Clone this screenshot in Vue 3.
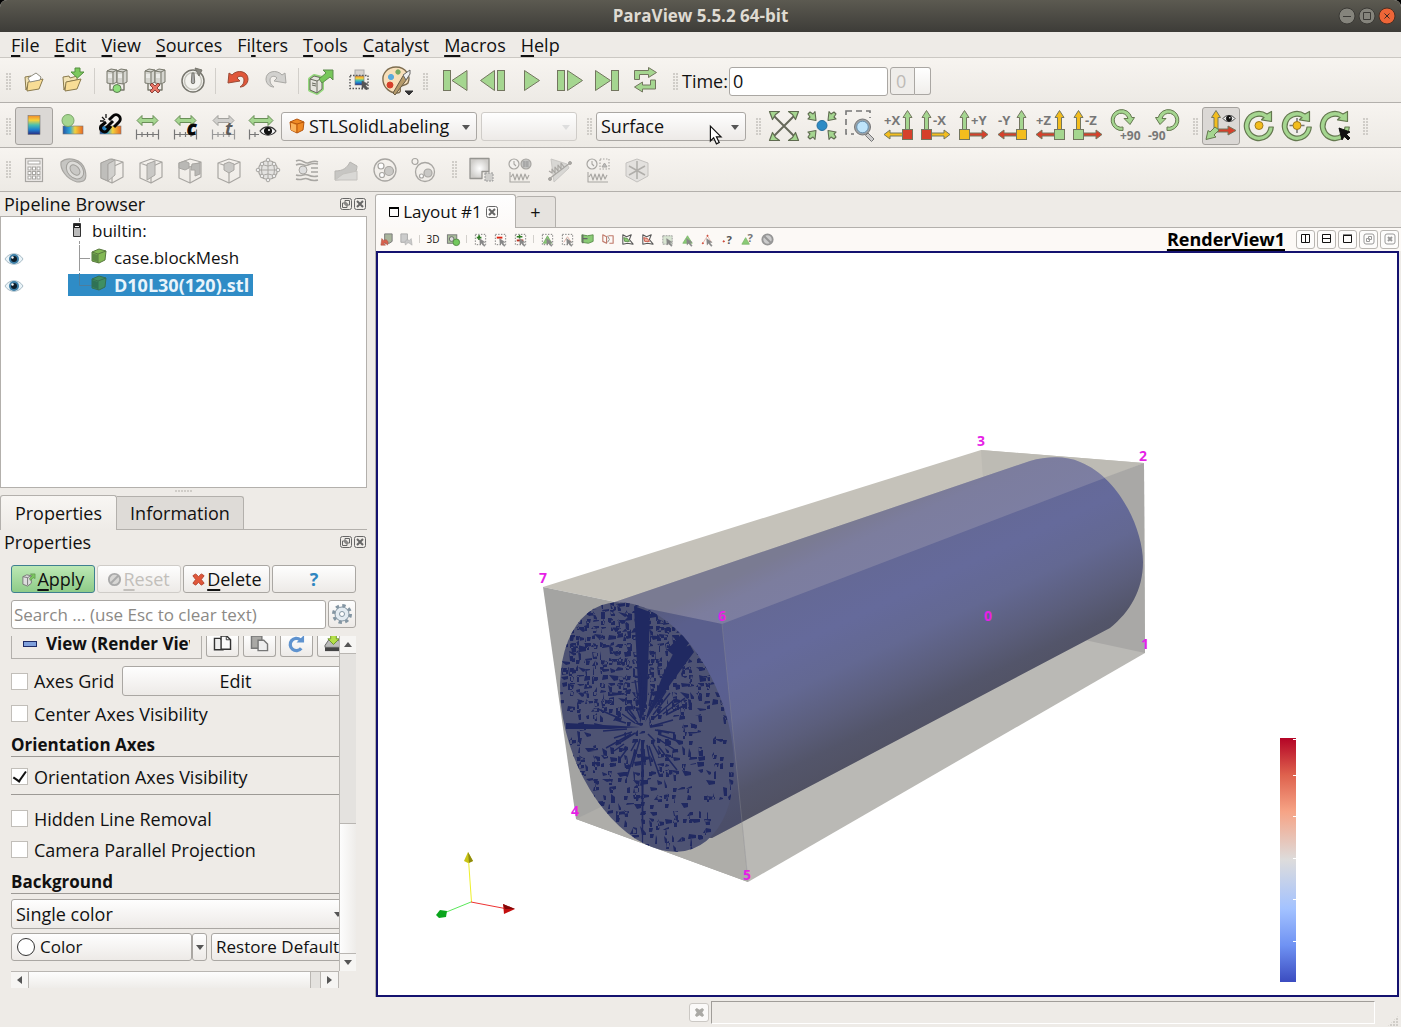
<script setup>
const GREEN = '#a5d690'
const EDGE = '#73765f'
const YELLOW = '#f3bd1d'
const RED = '#d6402b'

const p = (d, fill = 'none', stroke = EDGE, w = 1) =>
  `<path d="${d}" fill="${fill}" stroke="${stroke}" stroke-width="${w}" stroke-linejoin="round"/>`
const c = (x, y, r, fill = 'none', stroke = EDGE, w = 1) =>
  `<circle cx="${x}" cy="${y}" r="${r}" fill="${fill}" stroke="${stroke}" stroke-width="${w}"/>`
const r = (x, y, w, h, fill = 'none', stroke = EDGE, sw = 1, extra = '') =>
  `<rect x="${x}" y="${y}" width="${w}" height="${h}" fill="${fill}" stroke="${stroke}" stroke-width="${sw}" ${extra}/>`
const t = (x, y, s, text, fill = '#777', extra = '') =>
  `<text x="${x}" y="${y}" font-size="${s}" font-weight="700" fill="${fill}" ${extra}>${text}</text>`

const folder =
  p('M7 12l6-1 1 2 7-2v4l-10 2-3 8z', '#f2e3b4', '#8a7a4c') +
  p('M10 17l15-3-4 10-12 2z', '#f8dd96', '#8a7a4c')
const servers = (x) =>
  p(`M${x} 6l4-2 6 1v12l-4 2-6-1z`, '#d5d5cf', '#77776b') +
  p(`M${x} 6l6 1 4-2M${x + 6} 7v12`, 'none', '#77776b') +
  p(`M${x + 1} 10h4M${x + 1} 12h4`, 'none', '#fff')
const serverBase = servers(6) + servers(16) + p('M9 19v6h4M23 19v6h-4', 'none', '#77776b', 1.4)
const rainbowV = (x, y, w, h) => r(x, y, w, h, 'url(#rainbowV)', '#777', 0.6)
const rainbowH = (x, y, w, h) => r(x, y, w, h, 'url(#rainbowH)', '#777', 0.6)
const ruler = (col, x = 4) =>
  p(`M${x + 0.5} 19.5v10M${x + 22.5} 19.5v10M${x} 24.5h23M${x + 6} 22v5M${x + 11.5} 22v5M${x + 17} 22v5`, 'none', col, 1.2)
const arrowLR = (fill, edge, x = 5, w = 21) =>
  p(`M${x} 10.500l5-5v3h${w - 10}v-3l5 5-5 5v-3h-${w - 10}v3z`, fill, edge)
const cubeG = '#a8a6a2'
const wireCube = p('M5 9l11-4 11 3v15l-11 6-11-5zM5 9l11 4 11-5M16 13v16', 'none', cubeG, 1.2)
const eye = (x, y, s = 1) =>
  `<g transform="translate(${x} ${y}) scale(${s})">` +
  p('M-8 0c4-5.500 12-5.500 16 0c-4 5.500-12 5.500-16 0z', '#f4f4f4', '#333', 1.2) +
  c(0, 0, 3.6, '#111', '#111') + c(1, -1, 1, '#fff', 'none') + '</g>'

function axis(label, side, v, h, sq) {
  const right = side === 'r'
  const x = right ? 25.5 : 6.5
  const harrow = right
    ? p('M2 24.500l6-4.500v3h13v3h-13v3z', h)
    : p('M30 24.500l-6-4.500v3h-13v3h13v3z', h)
  return (
    harrow +
    p(`M${x} .5l4.500 7h-2.500v12h-4v-12h-2.500z`, v) +
    r(x - 5, 19.5, 10, 10, sq, EDGE) +
    t(right ? 2 : 13, 15, 13, label)
  )
}
const rotateRing = p('M30.300 17A14.500 14.500 0 1 1 24 4L28.500 1.500V11.500L18.500 9.800L21 7.500A10 10 0 1 0 26 17z', GREEN, '#64784f', 1.2)

const icons = {
  open: folder + p('M10 13l8-5 5 4-1 3-10 2z', '#fff', '#8f8d80'),
  recent: folder + p('M19 3h5v4h4l-6.500 6-6.500-6h4z', '#7cc95e', '#558f41'),
  connect: serverBase + c(16, 23.5, 4, '#8fe07c', '#5d7d52'),
  disconnect: serverBase + p('M11 20l2-2 3 3 3-3 2 2-3 3 3 3-2 2-3-3-3 3-2-2 3-3z', '#e77466', '#8e453c'),
  timer: c(16, 16, 11, '#f4f3ef', '#77766e', 1.5) + c(16, 16, 8.500, 'none', '#c4c3bb', 1.4) + p('M15 8h2l.7 9a1.700 1.700 0 1 1-3.400 0z', '#aaa', '#77766e') + p('M18 3l7 2-3 6z', '#8a8981', '#77766e'),
  undo: p('M6 18l1-10 3 2c5-6 16-4 16 4 0 5-4 8-8 8 3-2 4-4 4-7 0-4-5-5-7-2l3 3z', '#e0573a', '#9a4a35'),
  redo: p('M26 18l-1-10-3 2c-5-6-16-4-16 4 0 5 4 8 8 8-3-2-4-4-4-7 0-4 5-5 7-2l-3 3z', '#d2d1ce', '#a9a8a4'),
  apply: `<path d="M5 14l4-3 8 2v11l-5 4-7-3z" fill="none" stroke="#94d77c" stroke-width="4" stroke-linejoin="round"/>` + p('M5 14l4-3 8 2v11l-5 4-7-3z', '#e4e4dd', '#66685c') + p('M5 14l7 2 5-3M12 16v12M7 18l4 1M7 20l4 1', 'none', '#66685c') + p('M14 14l7-6-3-3h10v10l-3-3-8 6z', '#77c75a', '#5f8d4e'),
  extract: r(12, 5, 9, 6, '#d7d3cf', '#aaa') + r(7, 10.5, 18, 13, 'none', '#555', 1.4, 'stroke-dasharray="1.500 1.500"') + rainbowV(12, 11, 9, 9) + p('M19 16l6 3-2.500 1.500 2.500 3-1.500 1.500-3-3-1.500 2.500z', '#555', '#555', 0.6),
  palette: p('M15 2C6 2 1 9 2 16s7 12 14 12c5 0 3-4 3-6s6-1 8-4C30 11 25 2 15 2z', '#f7dfba', '#7d6c4e', 1.4) + c(10, 12, 2.600, '#58a9dc', '#58a9dc') + c(17, 7, 2.200, '#76a95f', '#76a95f') + c(9, 20, 3, '#d6402b', '#d6402b') + p('M27 7l-5 4-10 17 2 2 12-16z', '#b59a6a', '#665b45') + p('M29 5l-7 5 3 5 4-6z', '#eee', '#666') + p('M24 26h8l-4 4z', '#333', '#333'),
  first: r(4.5, 5.500, 7, 20, GREEN) + p('M28 5.500v20l-15-10z', GREEN),
  back: p('M17.500 5.500v20l-14-10z', GREEN) + r(20.500, 5.500, 7, 20, GREEN),
  play: p('M9.500 5.500v20l15-10z', GREEN),
  forward: r(4.5, 5.500, 7, 20, GREEN) + p('M14.500 5.500v20l15-10z', GREEN),
  last: p('M4.500 5.500v20l15-10z', GREEN) + r(20.500, 5.500, 7, 20, GREEN),
  loop: p('M5.500 14.500v-9h14v-3l8 5-8 5v-3h-9v5z', GREEN) + p('M26.500 15v9h-13v3l-8-5 8-5v3h8v-5z', GREEN),

  colorLegend: rainbowV(10, 5.500, 12, 19),
  editMap: rainbowH(7, 16, 20, 8) + c(12, 10.500, 6, GREEN, '#7aa569'),
  rescaleUse: rainbowH(6, 16, 21, 8) + '<path d="M15 10l4-4a4 4 0 0 1 6 6l-5 5M17 16l-4 5a4 4 0 0 1-6-5l5-4M12 18l7-7" fill="none" stroke="#050505" stroke-width="3"/>' + p('M8 7l3 3M12 4v4M6 11h4', 'none', '#111', 1.3),
  rescale: arrowLR(GREEN, '#6a8f58') + ruler('#777', 4),
  rescaleC: arrowLR(GREEN, '#6a8f58') + ruler('#777', 4) + t(17, 25, 19, 'c', '#050505', 'font-style="italic" stroke="#050505"'),
  rescaleT: arrowLR('#d0cfcc', '#a3a29e') + ruler('#999', 4) + t(17, 25, 18, 't', '#5b5b5b', 'font-style="italic"'),
  rescaleV: arrowLR(GREEN, '#6a8f58', 3, 24) + p('M3.500 19.500v10M3 24.500h10M9 22v5', 'none', '#777', 1.2) + eye(22, 21),
  resetCam: p('M6 6L26 26M26 6L6 26', 'none', '#66685a', 2) + p('M1.500 1.500h10l-4 3-3 5zM30.500 1.500h-10l4 3 3 5zM1.500 30.500h10l-4-3-3-5zM30.500 30.500h-10l4-3 3-5z', GREEN, '#5f6b50', 1.2),
  zoomData: c(16, 15.500, 5, '#2d8bc5', '#266f9e') + p('M10 10.500l-1-9-2 2.500-3-2-2 2 2 3-2 2zM22 10.500l1-9 2 2.500 3-2 2 2-2 3 2 2zM10 20.500l-1 9-2-2.500-3 2-2-2 2-3-2-2zM22 20.500l1 9 2-2.500 3 2 2-2-2-3 2-2z', GREEN, '#5f6b50', 1.1),
  zoomBox: r(2, 1, 24, 23, 'none', '#777', 1.6, 'stroke-dasharray="6 4"') + r(10, 8, 18, 18, '#f4f1ed', 'none') + c(18.500, 17, 8, '#9ea3a5', '#777') + c(18.500, 17, 5.800, '#bfe4fa', '#6790b0') + p('M24 23l6 6-2.500 2.500-6-6z', '#ccc', '#777'),
  px: axis('+X', 'r', GREEN, YELLOW, RED),
  mx: axis('-X', 'l', GREEN, YELLOW, RED),
  py: axis('+Y', 'l', GREEN, RED, YELLOW),
  my: axis('-Y', 'r', GREEN, RED, YELLOW),
  pz: axis('+Z', 'r', YELLOW, RED, GREEN),
  mz: axis('-Z', 'l', YELLOW, RED, GREEN),
  cw: p('M13 20.500A10.500 10.500 0 1 1 21.800 7.500H24.500L20 14.500L14 8.500H18A7 7 0 1 0 13 17z', GREEN, '#64784f') + t(10, 30, 12, '+90'),
  ccw: p('M19 20.500A10.500 10.500 0 1 0 10.200 7.500H7.500L12 14.500L18 8.500H14A7 7 0 1 1 19 17z', GREEN, '#64784f') + t(0, 30, 12, '-90'),
  axesEye: p('M11 .5l4.500 7h-2.500v13h-4v-13h-2.500z', YELLOW) + p('M31 20.500l-8-4.500v3h-11v3h11v3z', RED) + p('M10 17l4 3-5 5 2 2-10 2.500 2-9 2 1.500z', GREEN, '#64784f') + eye(24, 8.5, 0.75),
  center: rotateRing + c(16, 15.5, 4, YELLOW, '#a07b21'),
  pickCenter: rotateRing + p('M16 8v15M8.500 15.500h15', 'none', '#777', 1.6) + c(16, 15.5, 4, YELLOW, '#a07b21'),
  rotCursor: rotateRing + p('M20 18l11 4-4 2 4 4-2 2-4-4-2 4z', '#111', '#111'),

  calc: r(7.500, 4.500, 17, 23, '#efedea', cubeG, 1.2) + r(10, 7, 12, 3, '#fff', cubeG) + [10, 14.500, 19].map((x) => [13, 17.500, 22].map((y) => r(x, y, 3, 3, '#fff', cubeG)).join('')).join(''),
  contour: p('M4 8c7-6 21-3 24 8s-2 12-8 12C9 25 3 15 4 8z', '#c6c5c2', cubeG, 1.2) + '<ellipse cx="18" cy="16" rx="10" ry="7.500" transform="rotate(48 18 16)" fill="#dddcd9" stroke="#a19f9b"/><ellipse cx="18" cy="16" rx="6" ry="4" transform="rotate(48 18 16)" fill="#c9c8c5" stroke="#a19f9b"/>',
  clip: wireCube + p('M5 9l9-4 5 1-7 4v17l-7-3z', '#bfbebb', cubeG) + p('M12 10l7-4v15l-7 6z', '#d0cfcc', cubeG),
  slice: wireCube + p('M12 10l8-3v14l-8 5z', '#c9c8c5', cubeG),
  threshold: wireCube + p('M5 9l6-2 4 2v5l-4 2-6-2zM18 10l8-1v11l-5 2v-6h-4z', '#b9b8b5', cubeG),
  subset: wireCube + p('M11 10l5-2 5 2v6l-5 3-5-3z', '#c9c8c5', cubeG),
  glyph: c(16, 16, 9.5, '#e4e3e1', cubeG, 1.2) + p('M16 5v22M5 16h22M9 9q7 6 14 0M9 23q7-6 14 0M12 7q-5 9 0 18M20 7q5 9 0 18', 'none', cubeG) + [[16, 6], [16, 26], [6, 16], [26, 16], [10, 10], [22, 10], [10, 22], [22, 22]].map(([x, y]) => c(x, y, 1.8, '#eee', cubeG)).join(''),
  stream: p('M5 7c6-3 8 3 12 2s6-3 10-1M5 11c6-3 8 2 12 0s6-2 10-1M5 21c6 2 8-2 12 0s6 2 10 1M5 25c6 2 8-2 12 0s6 2 10 1M20 14h7M20 18h7', 'none', cubeG, 1.5) + c(12, 16, 4, '#ddd', cubeG),
  warp: p('M5 17c8 0 12-3 15-9l7 4c0 8-6 13-22 14z', '#c7c6c3', '#b7b5b1') + p('M5 26l8-6 14-3v9z', '#d9d8d5', '#c4c2be'),
  group: c(16, 16, 11, 'none', cubeG, 1.3) + c(20, 17, 4.500, '#c9c8c5', cubeG, 1.2) + c(12, 12, 3, '#fff', cubeG, 1.2) + c(13, 21, 2.500, '#fff', cubeG, 1.2),
  ungroup: c(17, 18, 9.500, 'none', cubeG, 1.3) + c(20, 19, 4, '#c9c8c5', cubeG, 1.2) + c(7, 7.500, 3, 'none', cubeG, 1.2) + c(13.500, 22, 2, '#fff', cubeG, 1.2),
  extractSel: p('M5 4.500h19v13h-7v7h-12z', 'url(#greyBox)', '#969591', 1.3) + r(20, 19, 8, 8, '#cfcecb', '#999', 1, 'stroke-dasharray="2 1"'),
  plotTime: c(10, 10, 5, '#f3f1ee', cubeG, 1.2) + p('M10 7v3l2 2M6 18v10h20M7 23l2-3 2 6 2-6 2 6 2-6 2 6 2-6 2 5 2-4', 'none', cubeG, 1.1) + c(22, 10, 5, '#c4c4c2', cubeG, 1.2) + p('M19 8h6M19 10h6M19 12h6M20 7v6M23 7v6', 'none', '#999', .8),
  plotLine: p('M8 5l16 5 2 4-15 14z', '#d8d7d4', '#cac8c5') + p('M6 25l21-16M6 17l3 2 0-4 3 4 0-6 3 4 0-6 3 4 0-6 3 4', 'none', cubeG, 1.2) + c(7, 25, 1.500, cubeG, cubeG) + c(27, 9, 1.500, cubeG, cubeG),
  plotSel: c(10, 10, 5, '#f3f1ee', cubeG, 1.2) + p('M10 7v3l2 2M6 18v10h20M7 23l2-3 2 6 2-6 2 6 2-6 2 6 2-6 2 5 2-4', 'none', cubeG, 1.1) + r(18, 5, 9, 10, 'none', cubeG, 1.2, 'stroke-dasharray="1.500 1.500"') + p('M20 13l2.500-4 2.500 4z', '#bbb', cubeG),
  probe: p('M5 9l11-4 11 4v13l-11 6-11-6z', '#e3e1de', '#c4c2bf') + p('M16 7v18M8 12l16 9M24 12l-16 9', 'none', '#b0aeaa', 1.5)
}

const sel = r(2.500, 2.500, 11, 11, 'none', '#777', 1, 'stroke-dasharray="1.500 1.500"')
const ptr = p('M7 7l6 4-2.500.5 2.500 3-1 1-3-3.500-1.500 2z', '#888', '#888', .4)
const mini = {
  camUndo: p('M6 2h8v8l-3 2h-5z', '#a9b59c', '#777') + p('M2 14l1-7 2 2c3-2 6 1 4 5-1-2-3-3-4-2l2 2z', '#d8604c', '#a54', .6),
  camRedo: p('M2 2h7v7l-3 2h-4z', '#ccc', '#aaa') + p('M14 14l-1-7-2 2c-3-2-6 1-4 5 1-2 3-3 4-2z', '#c9c9c9', '#aaa', .6),
  shot: r(1.500, 3, 10, 9, '#a9bf9b', '#777') + c(6, 7.500, 2.500, '#ddd', '#666') + c(11, 11, 3.500, '#73c95d', '#548b45'),
  add: sel + p('M4 6h5M6.500 3.500v5', 'none', '#2f7d25', 2) + ptr,
  sub: sel + p('M4 6h6', 'none', '#d21', 2) + ptr,
  toggle: sel + p('M4 5h6M7 3v4', 'none', '#2f7d25', 1.600) + p('M4 9h7', 'none', '#b32', 2) + ptr,
  cells: sel + p('M3.500 12l4.500-8 4.500 8z', '#8acb75', '#6fa860', .8) + ptr,
  points: sel + p('M4 11l4-6 4 6', 'none', '#dfb0a6', 1) + ptr,
  frC: p('M2 3l6 1 6-1v7l-5 2-7-1z', '#8acb75', '#5f9150') + p('M3 3v9M3 7h5', 'none', '#666', 1.300),
  frP: p('M3 3l4 2v7l-4-2zM9 4h5v8h-4', 'none', '#c07a6b', 1.200) + p('M8 4l2 4-2 3', 'none', '#888'),
  polyC: p('M3 3l4 2 5-2-2 5 4 5-6-1-5 1z', 'none', '#555', 1.100) + p('M4 6l4 1 2 3-5 0z', '#8acb75', '#5f9150'),
  polyP: p('M3 3l4 2 5-2-2 5 4 5-6-1-5 1z', 'none', '#555', 1.100) + p('M4 6l4 1 2 3-5 0z', '#e8b5a8', '#c54'),
  block: r(3, 4, 10, 9, '#d8e5d2', '#999', 1, 'stroke-dasharray="2 1"') + ptr,
  hovC: p('M3 12l5-8 5 8z', '#8acb75', '#77b366', .8) + ptr,
  hovP: p('M3 12l5-8 4 7', 'none', '#e6b9ae', 1) + c(3, 12, .6, '#c43', '#c43') + c(8, 4, .6, '#c43', '#c43') + ptr,
  askP: c(4, 10, .7, '#c43', '#c43') + t(7, 13, 12, '?', '#555'),
  askC: p('M2 13l4-7 4 7z', '#8acb75', '#77b366', .8) + t(8, 11, 12, '?', '#777'),
  none: c(8, 8, 5.5, '#ccc', '#969696', 2) + p('M4.500 4.500l7 7', 'none', '#969696', 2)
}

const menus = ['|File', '|Edit', '|View', '|Sources', 'Fi|lters', '|Tools', '|Catalyst', '|Macros', '|Help'].map((m) => {
  const [pre, rest] = m.split('|')
  return { pre, key: rest[0], post: rest.slice(1) }
})
const fileBar = [['open', 'recent'], ['connect', 'disconnect', 'timer'], ['undo', 'redo'], ['apply', 'extract', 'palette']]
const vcrBar = ['first', 'back', 'play', 'forward', 'last', 'loop']
const colorBar = ['colorLegend', 'editMap', 'rescaleUse', 'rescale', 'rescaleC', 'rescaleT', 'rescaleV']
const cameraBar = ['resetCam', 'zoomData', 'zoomBox', 'px', 'mx', 'py', 'my', 'pz', 'mz', 'cw', 'ccw']
const centerBar = ['axesEye', 'center', 'pickCenter', 'rotCursor']
const filterBar = ['calc', 'contour', 'clip', 'slice', 'threshold', 'subset', 'glyph', 'stream', 'warp', 'group', 'ungroup']
const dataBar = ['extractSel', 'plotTime', 'plotLine', 'plotSel', 'probe']
const viewBar = [['camUndo', 'camRedo'], ['3D', 'shot'], ['add', 'sub', 'toggle'], ['cells', 'points', 'frC', 'frP', 'polyC', 'polyP', 'block', 'hovC', 'hovP', 'askP', 'askC', 'none']]

const corners = [
  { n: 0, x: 988, y: 621 }, { n: 1, x: 1145, y: 649 }, { n: 2, x: 1143, y: 461 }, { n: 3, x: 981, y: 446 },
  { n: 4, x: 575, y: 816 }, { n: 5, x: 747, y: 880 }, { n: 6, x: 722, y: 621 }, { n: 7, x: 543, y: 583 }
]
const ticks = [739, 775, 816, 858, 899, 941]

// Z-fighting pattern on the cap: broken grid strokes, denser toward the top left
let seed = 77
const rnd = () => (seed = (seed * 16807) % 2147483647) / 2147483647
function capPattern() {
  const out = []
  for (let y = 602; y < 852; y += 8) {
    for (let x = 560; x < 736; x += 8) {
      let dense = y < 700 ? 0.78 : 0.42
      if (x > 690 && y > 690) dense = 0.24
      if (y > 745 && x < 650) dense = 0.55
      if (x > 655 && y < 700 && x - 643 > (728 - y) * 0.45 && x - 643 < (728 - y) * 0.65) dense = 0.2
      if (x < 630 && y > 718 && y < 738) dense = 0.08
      const j = () => Math.round(rnd() * 3)
      if (rnd() < dense) out.push(`M${x + j()} ${y + j()}l${3 + j() * 2} ${j() - 1}v${1 + j()}l-${2 + j() * 2} 1z`)
      if (rnd() < dense) out.push(`M${x + j()} ${y + j()}l${j() - 1} ${3 + j() * 2}h${1 + j()}v-${2 + j() * 2}z`)
      if (rnd() < dense * 0.4) out.push(`M${x + j()} ${y + j()}h4l-1 4h-3z`)
    }
  }
  return out.join('')
}
function capRays() {
  const out = []
  for (let i = 0; i < 40; i++) {
    const a = ((i + rnd()) / 40) * Math.PI * 2
    const s = 7 + rnd() * 22
    const e = s + 8 + rnd() * 24
    out.push(`M${Math.round(643 + s * Math.cos(a) * 0.9)} ${Math.round(728 + s * Math.sin(a))}L${Math.round(643 + e * Math.cos(a) * 0.9)} ${Math.round(728 + e * Math.sin(a))}`)
  }
  return out.join('')
}
const pattern = capPattern()
const rays = capRays()
</script>

<template>
  <div class="app">
    <svg class="defs" aria-hidden="true">
      <defs>
        <linearGradient id="rainbowV" x1="0" y1="0" x2="0" y2="1">
          <stop offset="0" stop-color="#f08a2a" /><stop offset=".25" stop-color="#f6d23a" /><stop offset=".5" stop-color="#49c0b0" /><stop offset=".75" stop-color="#1d7fd0" /><stop offset="1" stop-color="#2a2a80" />
        </linearGradient>
        <linearGradient id="rainbowH">
          <stop offset="0" stop-color="#2456a8" /><stop offset=".35" stop-color="#2fa7d6" /><stop offset=".6" stop-color="#f2d13c" /><stop offset="1" stop-color="#ea6a24" />
        </linearGradient>
        <radialGradient id="greyBox"><stop offset="0" stop-color="#fff" /><stop offset="1" stop-color="#cfcdca" /></radialGradient>
      </defs>
    </svg>

    <header class="titlebar">
      <h1>ParaView 5.5.2 64-bit</h1>
      <div class="wm">
        <button aria-label="Minimize"><svg viewBox="0 0 18 18"><circle cx="9" cy="9" r="8" fill="#85847c" stroke="#3a3935" /><path d="M5 9.500h8" stroke="#3c3b37" /></svg></button>
        <button aria-label="Maximize"><svg viewBox="0 0 18 18"><circle cx="9" cy="9" r="8" fill="#85847c" stroke="#3a3935" /><path d="M5.500 5.500h7v7h-7z" fill="none" stroke="#3c3b37" /></svg></button>
        <button aria-label="Close"><svg viewBox="0 0 18 18"><circle cx="9" cy="9" r="8" fill="#ee6537" stroke="#4a2f24" /><path d="M6.500 6.500l5 5M11.500 6.500l-5 5" stroke="#3c2a22" /></svg></button>
      </div>
    </header>

    <nav class="menubar">
      <a v-for="m in menus" :key="m.post" href="#">{{ m.pre }}<u>{{ m.key }}</u>{{ m.post }}</a>
    </nav>

    <div class="toolbar">
      <i class="grip"></i>
      <template v-for="(g, i) in fileBar" :key="i">
        <i v-if="i" class="sep"></i>
        <button v-for="n in g" :key="n" class="tool" :aria-label="n"><svg viewBox="0 0 32 32" v-html="icons[n]"></svg></button>
      </template>
      <i class="grip after"></i>
      <button v-for="n in vcrBar" :key="n" class="tool" :aria-label="n"><svg viewBox="0 0 32 32" v-html="icons[n]"></svg></button>
      <i class="grip time"></i>
      <label for="time">Time:</label>
      <input id="time" class="field time-value" value="0">
      <input class="field step" value="0" disabled aria-label="Time step"><i class="spin"></i>
    </div>

    <div class="toolbar">
      <i class="grip"></i>
      <button v-for="(n, i) in colorBar" :key="n" class="tool" :class="{ on: !i }" :aria-label="n"><svg viewBox="0 0 32 32" v-html="icons[n]"></svg></button>
      <div class="combo array">
        <svg class="cell" viewBox="0 0 16 16"><path d="M1 4l7-3 7 3-1 8-6 3-6-3z" fill="#f08a24" stroke="#b5560f" /><path d="M1 4l7 2 7-2M8 6v9" fill="none" stroke="#b5560f" /><path d="M2 5l5 2v7l-5-2z" fill="#fbb35c" /></svg>
        <select aria-label="Color by"><option>STLSolidLabeling</option></select>
      </div>
      <div class="combo component off"><select aria-label="Component" disabled><option></option></select></div>
      <i class="grip mid"></i>
      <div class="combo repr">
        <select aria-label="Representation"><option>Surface</option></select>
        <svg class="pointer" viewBox="0 0 14 22"><path d="M1.500 1.500v16l3.500-3.500 3 6.500 3-1.500-3-6h5z" fill="#fff" stroke="#111" stroke-width="1.300" /></svg>
      </div>
      <i class="grip mid"></i>
      <button v-for="n in cameraBar" :key="n" class="tool" :aria-label="n"><svg viewBox="0 0 32 32" v-html="icons[n]"></svg></button>
      <i class="grip axes"></i>
      <button v-for="(n, i) in centerBar" :key="n" class="tool" :class="{ on: !i }" :aria-label="n"><svg viewBox="0 0 32 32" v-html="icons[n]"></svg></button>
      <i class="grip end"></i>
    </div>

    <div class="toolbar filters">
      <i class="grip"></i>
      <button v-for="n in filterBar" :key="n" class="tool wide" disabled :aria-label="n"><svg viewBox="0 0 32 32" v-html="icons[n]"></svg></button>
      <i class="grip data"></i>
      <button v-for="n in dataBar" :key="n" class="tool wide" disabled :aria-label="n"><svg viewBox="0 0 32 32" v-html="icons[n]"></svg></button>
    </div>

    <main class="workspace">
      <aside class="docks">
        <section class="pipeline">
          <div class="dock-title"><h2>Pipeline Browser</h2>
            <button class="dock-btn" aria-label="Float"><svg viewBox="0 0 12 12"><rect x=".5" y=".5" width="11" height="11" rx="2" /><path d="M5 2.500h4.500V7H5zM2.500 5H7v4.500H2.500z" /></svg></button>
            <button class="dock-btn" aria-label="Close"><svg viewBox="0 0 12 12"><rect x=".5" y=".5" width="11" height="11" rx="2" /><path d="M3 3l6 6M9 3l-6 6" stroke-width="2" /></svg></button>
          </div>
          <ul class="tree">
            <li>
              <span class="vis"></span>
              <span class="node"><svg class="branch server" viewBox="0 0 24 26"><path d="M11.500 0v4M11.500 23v3" stroke="#999" /><path d="M5.500 5.500h7v13h-7z" fill="#bbb" stroke="#333" /><path d="M6 6h6v4h-6z" fill="#222" /><path d="M7 8.500h4" stroke="#fff" /></svg>builtin:</span>
            </li>
            <li v-for="(name, i) in ['case.blockMesh', 'D10L30(120).stl']" :key="name">
              <span class="vis"><svg viewBox="0 0 20 14"><path d="M1 7c4-7 14-7 18 0c-4 7-14 7-18 0z" fill="#e9f3f8" stroke="#a9bcc6" /><circle cx="10" cy="7" r="5" fill="#3d7ea6" /><circle cx="10" cy="7" r="3" fill="#0d1c28" /><circle cx="8.500" cy="5.500" r="1.200" fill="#fff" /></svg></span>
              <span class="node" :class="{ selected: i }">
                <svg class="branch" viewBox="0 0 46 26"><path :d="i ? 'M11.500 1v12.500h12' : 'M11.500 0v26M12 13.500h10'" fill="none" :stroke="i ? '#4d7d9c' : '#999'" /><path d="M24 7l7-3 7 2-1 9-6 3-7-2z" :fill="i ? '#3f8f62' : '#83b955'" :stroke="i ? '#356f52' : '#59793f'" /><path d="M24 7l6 2 8-3M30 9v9" fill="none" :stroke="i ? '#356f52' : '#59793f'" /><path d="M24 8l6 2v7l-6-2z" :fill="i ? '#2f7255' : '#5d8a44'" /></svg>{{ name }}
              </span>
            </li>
          </ul>
        </section>

        <div class="splitter"></div>
        <div class="tabs">
          <button class="tab active">Properties</button>
          <button class="tab">Information</button>
        </div>

        <section class="properties">
          <div class="dock-title"><h2>Properties</h2>
            <button class="dock-btn" aria-label="Float"><svg viewBox="0 0 12 12"><rect x=".5" y=".5" width="11" height="11" rx="2" /><path d="M5 2.500h4.500V7H5zM2.500 5H7v4.500H2.500z" /></svg></button>
            <button class="dock-btn" aria-label="Close"><svg viewBox="0 0 12 12"><rect x=".5" y=".5" width="11" height="11" rx="2" /><path d="M3 3l6 6M9 3l-6 6" stroke-width="2" /></svg></button>
          </div>
          <div class="actions">
            <button class="btn apply"><svg viewBox="0 0 16 16"><path d="M2 5l4-2 5 1v8l-4 3-5-2z" fill="#ddd" stroke="#777" /><path d="M2 5l5 1 4-2M7 6v8" fill="none" stroke="#777" /><path d="M9 7l3-3-2-2h5v5l-2-1-3 3z" fill="#7bc75f" stroke="#5b9149" stroke-width=".7" /></svg><span><u>A</u>pply</span></button>
            <button class="btn" disabled><svg viewBox="0 0 16 16"><circle cx="8" cy="8" r="6" fill="#d8d7d5" stroke="#aaa" stroke-width="2" /><path d="M4 12l8-8" stroke="#aaa" stroke-width="2" /></svg><span><u>R</u>eset</span></button>
            <button class="btn delete"><svg viewBox="0 0 16 16"><path d="M2 4l3-2 3 3 3-3 3 2-3 4 3 4-3 2-3-3-3 3-3-2 3-4z" fill="#e0573a" stroke="#b4442f" /></svg><span><u>D</u>elete</span></button>
            <button class="btn help">?</button>
          </div>
          <div class="search">
            <input class="field" type="text" placeholder="Search ... (use Esc to clear text)" aria-label="Search properties">
            <button class="btn gear" aria-label="Advanced"><svg viewBox="0 0 22 22"><circle cx="11" cy="11" r="8" stroke="#8496a3" stroke-width="4" stroke-dasharray="3.200 3.083" fill="none" /><circle cx="11" cy="11" r="7" fill="#e3ebf1" stroke="#8496a3" /><circle cx="11" cy="11" r="2.500" fill="#fff" stroke="#8496a3" /></svg></button>
          </div>

          <div class="scroller">
            <div class="viewport">
              <div class="content">
                <div class="group-head">
                  <div class="group-name"><svg viewBox="0 0 14 6"><rect x=".5" y=".5" width="13" height="5" fill="#7fa0dc" stroke="#1d2a66" /></svg><b>View (Render View)</b></div>
                  <button class="btn" aria-label="Copy"><svg viewBox="0 0 20 18"><path d="M1.500 2.500h6l3 3v9h-9z" fill="#eee" stroke="#333" stroke-width="1.500" /><path d="M8.500 0h6l4 4v10h-10z" fill="#fafafa" stroke="#333" stroke-width="1.500" /><path d="M14 0v4h4" fill="none" stroke="#333" /></svg></button>
                  <button class="btn" aria-label="Paste"><svg viewBox="0 0 20 18"><path d="M1.500 0h11v13h-11z" fill="#a9a8a5" stroke="#777" stroke-width="1.500" /><path d="M8.500 4.500h6l4 4v7h-10z" fill="#eee" stroke="#777" stroke-width="1.500" /></svg></button>
                  <button class="btn" aria-label="Restore"><svg viewBox="0 0 20 18"><path d="M15 13a6.500 6.500 0 1 1-1-9" fill="none" stroke="#5f93cf" stroke-width="3.500" /><path d="M10 7h8V-1z" fill="#5f93cf" /></svg></button>
                  <button class="btn" aria-label="Save"><svg viewBox="0 0 20 18"><path d="M1 9h18v7h-18z" fill="#444" /><path d="M1 10l4-6h10l4 6v2h-18z" fill="#bbb" stroke="#666" /><path d="M7-2h6v5h3l-6 6-6-6h3z" fill="#b4e048" stroke="#6b932a" /></svg></button>
                </div>
                <div class="row grid-row"><label class="check"><input type="checkbox">Axes Grid</label><button class="btn edit">Edit</button></div>
                <label class="check row"><input type="checkbox">Center Axes Visibility</label>
                <h3>Orientation Axes</h3>
                <label class="check row ruled"><input type="checkbox" checked>Orientation Axes Visibility</label>
                <label class="check row spaced"><input type="checkbox">Hidden Line Removal</label>
                <label class="check row"><input type="checkbox">Camera Parallel Projection</label>
                <h3 class="bg">Background</h3>
                <div class="combo full"><select aria-label="Background mode"><option>Single color</option></select></div>
                <div class="color-row">
                  <button class="btn color"><i class="swatch"></i>Color</button>
                  <button class="btn drop" aria-label="Color presets"><i class="down"></i></button>
                  <button class="btn restore">Restore Default</button>
                </div>
              </div>
            </div>
            <div class="vbar"><span><i class="up"></i></span><em></em><span class="rest"></span><span><i class="down"></i></span></div>
            <div class="hbar"><span><i class="left"></i></span><strong></strong><em></em><span><i class="right"></i></span></div>
          </div>
        </section>
      </aside>

      <section class="layout">
        <div class="layout-tabs">
          <div class="ltab active"><svg class="win" viewBox="0 0 10 10"><path d="M.5 1h9v8.500h-9z" fill="none" stroke="#000" /><path d="M0 1h10" stroke="#000" stroke-width="2" /></svg><span>Layout #1</span>
            <button class="dock-btn" aria-label="Close layout"><svg viewBox="0 0 12 12"><rect x=".5" y=".5" width="11" height="11" rx="2" /><path d="M3 3l6 6M9 3l-6 6" stroke-width="2" /></svg></button></div>
          <button class="ltab plus">+</button>
        </div>
        <div class="view-head">
          <template v-for="(g, i) in viewBar" :key="i">
            <i v-if="i" class="vsep"></i>
            <template v-for="n in g" :key="n">
              <button v-if="n === '3D'" class="mini">3D</button>
              <button v-else class="mini" :aria-label="n"><svg viewBox="0 0 16 16" v-html="mini[n]"></svg></button>
            </template>
          </template>
          <a class="view-name" href="#">RenderView1</a>
          <button class="vbtn" aria-label="Split horizontal"><svg viewBox="0 0 12 12"><path d="M1.500 1.500h8v8h-8zM5.500 1.500v8" /></svg></button>
          <button class="vbtn" aria-label="Split vertical"><svg viewBox="0 0 12 12"><path d="M1.500 1.500h8v8h-8zM1.500 5.500h8" /></svg></button>
          <button class="vbtn" aria-label="Maximize"><svg viewBox="0 0 12 12"><path d="M1.500 2.500h8v7h-8zM1 2h9" /></svg></button>
          <button class="vbtn dim" aria-label="Float"><svg viewBox="0 0 12 12"><rect x="1" y="1" width="10" height="10" rx="2" /><path d="M5.500 3.500h3v3h-3zM3.500 5.500h3v3h-3z" /></svg></button>
          <button class="vbtn dim" aria-label="Close"><svg viewBox="0 0 12 12"><rect x="1" y="1" width="10" height="10" rx="2" /><path d="M4 4l4 4M8 4l-4 4" stroke-width="2" /></svg></button>
        </div>

        <div class="render">
          <svg viewBox="378 253 1019 742" preserveAspectRatio="xMidYMid meet">
            <defs>
              <linearGradient id="body" gradientUnits="userSpaceOnUse" x1="840" y1="525" x2="935" y2="727">
                <stop offset="0" stop-color="#626584" /><stop offset=".1" stop-color="#646893" /><stop offset=".4" stop-color="#656a9b" /><stop offset=".58" stop-color="#636892" /><stop offset=".76" stop-color="#5b5e7c" /><stop offset=".89" stop-color="#53556a" /><stop offset="1" stop-color="#515264" />
              </linearGradient>
              <linearGradient id="scale" x1="0" y1="0" x2="0" y2="1">
                <stop offset="0" stop-color="#b40426" /><stop offset=".15" stop-color="#de614d" /><stop offset=".3" stop-color="#f6a385" /><stop offset=".5" stop-color="#dddcdc" /><stop offset=".7" stop-color="#a3c2ff" /><stop offset=".85" stop-color="#6f92f3" /><stop offset="1" stop-color="#3b4cc0" />
              </linearGradient>
              <clipPath id="tube"><path d="M603 606L1030 461C1048 456 1066 456 1080 462C1120 478 1143 530 1143 562C1143 590 1130 612 1110 628L712 838L640 835L620 602z" /></clipPath>
              <clipPath id="cap"><ellipse cx="647" cy="727" rx="130" ry="79" transform="rotate(69.400 647 727)" /></clipPath>
            </defs>
            <path d="M543 587L981 450L1144 463L722 624z" fill="#c5c2ba" />
            <path d="M981 450L1144 463L1100 480L983 480z" fill="#bdbbb4" />
            <path d="M722 624L1144 463L1145 653L748 882z" fill="#bab9b5" />
            <path d="M1090 483L1144 463L1145 653L1080 639z" fill="#a9a8a6" />
            <path d="M543 587L722 624L748 882L576 819z" fill="#a4a4a2" />
            <path d="M576 819L640 788L742 820L748 882z" fill="#aeada9" />
            <g clip-path="url(#tube)">
              <path d="M540 400H1160V900H540z" fill="url(#body)" />
              <path d="M543 587L981 450L1144 463L722 624z" fill="#e3dcd0" fill-opacity=".19" />
              <path d="M543 587L722 624L748 882L576 819z" fill="#3c4278" fill-opacity=".25" />
            </g>
            <g clip-path="url(#cap)">
              <path d="M543 580H748V882H543z" fill="#4e5373" />
              <g fill="#202961">
                <path :d="pattern" />
                <path d="M640 724L634 606L650 612L647 700zM645 722L664 672L674 652L690 645L694 652L672 682L655 706zM640 727L566 723V729L610 729zM667 650l20-22 8 8-18 22zM641 740l1 110h1l1-110z" />
                <path :d="rays" fill="none" stroke="#202961" stroke-width="1.500" />
              </g>
            </g>
            <path d="M722 624L748 881" stroke="#8b8b92" stroke-opacity=".4" />
            <g class="corner"><text v-for="k in corners" :key="k.n" :x="k.x" :y="k.y">{{ k.n }}</text></g>

            <path d="M471.500 902L468.500 860" stroke="#eef02a" /><path d="M468 852l-4 9 4 2 5-2z" fill="#c9c414" /><path d="M468 852l1 11 4-2z" fill="#8f8b10" />
            <path d="M471 902L444 913" stroke="#5ae85a" /><path d="M436 915l4-5 7 1-1 6-7 1z" fill="#0aa51c" />
            <path d="M471 902L505 908.500" stroke="#e33" /><path d="M503 904l12 5-11 5z" fill="#c40e0e" /><path d="M503 904l12 5-10 0z" fill="#820808" />

            <rect x="1280" y="738" width="16" height="244" fill="url(#scale)" />
            <path v-for="y in ticks" :key="y" :d="`M1293 ${y}.500h3`" stroke="#fff" />
          </svg>
        </div>
      </section>
    </main>

    <footer class="status">
      <button class="abort" aria-label="Abort" disabled><svg viewBox="0 0 12 12"><path d="M1 3l2-2 3 2 3-2 2 2-2 3 2 3-2 2-3-2-3 2-2-2 2-3z" fill="#aaa9a5" /></svg></button>
      <div class="progress"></div>
      <i class="corner-grip"></i>
    </footer>
  </div>
</template>

<style>
html, body { margin: 0; background: #000; }
</style>

<style scoped>
* { box-sizing: border-box; }
.app {
  height: 100vh; display: flex; flex-direction: column; overflow: hidden;
  background: #eeebe7; color: #111; border-radius: 7px 7px 0 0;
  font: 18px/22px "Open Sans", "Noto Sans", sans-serif;
}
.defs { position: absolute; width: 0; height: 0; }
button, input, select { font: inherit; color: inherit; margin: 0; padding: 0; }
button { border: 0; background: none; }
h1, h2, h3 { margin: 0; font: inherit; }
svg { display: block; flex: none; overflow: visible; }
i { flex: none; font-style: normal; }
u { text-decoration-thickness: 2px; text-underline-offset: 3px; text-decoration-skip-ink: none; }

.titlebar { height: 32px; flex: none; display: flex; align-items: center; background: linear-gradient(#5c5a51, #3d3c38); color: #dfdbd2; }
.titlebar h1 { flex: 1; text-align: center; font-weight: 700; font-size: 17px; padding-left: 63px; }
.wm { display: flex; gap: 2px; padding-right: 5px; }
.wm svg { width: 18px; height: 18px; }

.menubar { height: 26px; flex: none; display: flex; gap: 15px; align-items: center; padding: 0 11px; border-bottom: 1px solid #cbc8c3; }
.menubar a { color: inherit; text-decoration: none; }

.toolbar { height: 45px; flex: none; display: flex; align-items: center; padding-top: 2px; background: linear-gradient(#f7f4f0, #edeae5); border-bottom: 1px solid #b3b0ac; }
.toolbar.filters { height: 44px; padding-top: 0; }
.grip { width: 5px; height: 17px; margin: 0 4px 0 6px; background: radial-gradient(circle at 1px 1px, #d0cdc8 1px, transparent 1px) 0 0 / 3px 3px; }
.filters .grip { margin-right: 3px; }
.grip.after { margin: 0 8px 0 7px; }
.grip.time { margin: 0 4px 0 9px; }
.grip.mid { margin: 0 4px 0 10px; }
.grip.axes { margin: 0 4px 0 10px; }
.grip.end { margin: 0 0 0 9px; }
.filters .grip.data { margin: 0 4px 0 9px; }
.sep { width: 1px; height: 26px; margin: 0 3px; background: #d2cfca; }
.tool { width: 38px; height: 38px; flex: none; display: grid; place-items: center; border: 1px solid transparent; border-radius: 3px; }
.tool.wide { width: 39px; }
.tool svg { width: 32px; height: 32px; }
.tool.on { background: #dbd8d5; border-color: #a5a29e; }
.field { height: 29px; border: 1px solid #aaa7a3; border-radius: 3px; background: #fff; padding: 0 3px; }
.time-value { width: 159px; margin: 0 2px 0 2px; }
.toolbar label { width: 45px; }
.step { width: 25px; background: #efedea; color: #bdbab6; padding-left: 5px; border-radius: 3px 0 0 3px; height: 28px; }
.spin { width: 16px; height: 28px; border: 1px solid #aaa7a3; border-left: 0; border-radius: 0 3px 3px 0; background: linear-gradient(#fff, #f0eeeb); }

.combo { position: relative; height: 29px; flex: none; display: flex; align-items: center; border: 1px solid #aaa7a3; border-radius: 3px; background: linear-gradient(#fefefe, #edeae7); }
.combo select { appearance: none; border: 0; background: none; width: 100%; height: 100%; padding: 0 4px; }
.combo::after { content: ""; position: absolute; right: 6px; top: 12px; border: 4px solid transparent; border-top: 5px solid #555; border-bottom: 0; pointer-events: none; }
.combo.off { border-color: #cfccc8; }
.combo.off::after { border-top-color: #ddd; }
.array { width: 196px; }
.array .cell { width: 16px; height: 16px; margin-left: 7px; }
.component { width: 96px; margin-left: 4px; }
.repr { width: 150px; }
.pointer { position: absolute; left: 112px; top: 11px; width: 13px; height: 22px; z-index: 2; }

.workspace { flex: 1; min-height: 0; display: flex; }
.docks { width: 375px; flex: none; display: flex; flex-direction: column; padding-right: 8px; min-height: 0; }
.dock-title { height: 24px; flex: none; display: flex; align-items: center; gap: 2px; padding: 0 1px 0 4px; }
.dock-title h2 { flex: 1; }
.dock-btn { width: 12px; height: 12px; flex: none; }
.dock-btn svg { width: 12px; height: 12px; fill: none; stroke: #666; }
.tree { list-style: none; margin: 0; padding: 1px 0 0; height: 272px; background: #fff; border: 1px solid #b3b0ac; font-size: 17px; }
.tree li { display: flex; align-items: center; height: 26px; }
.tree li + li { height: 27px; }
.vis { width: 67px; padding: 2px 0 0 3px; flex: none; }
.vis svg { width: 20px; height: 14px; }
.node { display: flex; align-items: center; height: 27px; white-space: nowrap; }
.branch { width: 46px; height: 26px; }
.branch.server { width: 24px; }
.node.selected { height: 22px; background: #2f8cc6; color: #e9f4fb; font-weight: 700; font-size: 18px; padding-right: 4px; }

.splitter { height: 7px; flex: none; width: 18px; align-self: center; background: radial-gradient(circle at 1px 1px, #d0cdc8 1px, transparent 1px) 0 2px / 3px 7px; }
.tabs { display: flex; align-items: flex-end; height: 35px; flex: none; border-bottom: 1px solid #b3b0ac; }
.tab { height: 33px; width: 127px; background: #dedbd7; border: 1px solid #b3b0ac; border-bottom: 0; border-left: 0; border-radius: 0 3px 0 0; }
.tab.active { height: 35px; width: 117px; margin-bottom: -1px; background: linear-gradient(#f8f6f3, #eeebe7); border-left: 1px solid #b3b0ac; border-radius: 3px 3px 0 0; }

.properties { flex: 1; min-height: 0; display: flex; flex-direction: column; }
.actions { display: flex; gap: 2px; padding: 11px 11px 0; }
.btn { display: flex; align-items: center; justify-content: center; height: 28px; border: 1px solid #aaa7a3; border-radius: 3px; background: linear-gradient(#fefefe, #edeae7); white-space: nowrap; }
.actions .btn { flex: 1 1 84px; min-width: 0; gap: 1px; }
.actions .btn.delete { flex-basis: 88px; }
.actions svg { width: 15px; height: 15px; }
.btn.apply { background: linear-gradient(#bce8b4, #8ecb88); border-color: #3f8090; }
.btn:disabled { color: #c2bfbb; border-color: #cfccc8; }
.btn.help { color: #2f86c0; font-weight: 700; }
.search { display: flex; gap: 2px; padding: 7px 11px 7px; }
.search .field { flex: 1; min-width: 0; padding: 0 2px; font-size: 17px; }
.search .field::placeholder { color: #8b8986; opacity: 1; }
.gear { width: 28px; }
.gear svg { width: 22px; height: 22px; }

.scroller { flex: 1; min-height: 0; margin: 0 11px 9px; display: grid; grid-template: minmax(0, 1fr) 17px / minmax(0, 1fr) 17px; }
.viewport { overflow: hidden; }
.content { width: 338px; }
.group-head { display: flex; gap: 4px; height: 24px; }
.group-name { width: 191px; flex: none; height: 23px; border: 1px solid #b3b0ac; border-top: 0; display: flex; align-items: center; gap: 9px; padding: 0 11px 6px; overflow: hidden; white-space: nowrap; font-size: 17px; }
.group-name svg { width: 14px; height: 6px; }
.group-name b { overflow: hidden; }
.group-head .btn { width: 33px; flex: none; height: 21px; border-top: 0; border-radius: 0 0 3px 3px; padding-bottom: 3px; }
.group-head .btn svg { width: 19px; height: 17px; }
.row { display: flex; align-items: center; height: 31px; }
.check { display: flex; align-items: center; gap: 6px; white-space: nowrap; }
.check input { appearance: none; width: 17px; height: 17px; flex: none; background: #fff; border: 1px solid #c1beb9; }
.check input:checked { display: grid; place-items: center; }
.check input:checked::after { content: ""; width: 6px; height: 11px; border: solid #111; border-width: 0 2px 2px 0; transform: rotate(35deg) translate(-1px, -1px); }
.grid-row { height: 38px; padding-top: 4px; justify-content: space-between; }
.grid-row .edit { width: 227px; height: 30px; flex: none; }
h3 { font-weight: 700; font-size: 17px; line-height: 22px; height: 27px; padding-top: 4px; border-bottom: 1px solid #9d9a96; margin: 1px 0 4px; }
h3.bg { margin: 2px 0 5px; }
.ruled { height: 34px; padding-bottom: 2px; border-bottom: 1px solid #9d9a96; }
.spaced { margin-top: 8px; }
.full { height: 30px; }
.color-row { display: flex; margin-top: 4px; font-size: 17px; }
.color-row .btn { flex: none; }
.color { width: 181px; justify-content: flex-start; gap: 5px; padding-left: 5px; }
.swatch { width: 18px; height: 18px; border: 1px solid #333; border-radius: 50%; background: #fff; }
.drop { width: 15px; margin-right: 4px; }
.restore { width: 150px; justify-content: flex-start; padding-left: 4px; }
.down, .up, .left, .right { width: 0; height: 0; border: 4px solid transparent; }
.down { border-top: 5px solid #555; border-bottom: 0; }
.up { border-bottom: 5px solid #555; border-top: 0; }
.left { border-right: 5px solid #555; border-left: 0; }
.right { border-left: 5px solid #555; border-right: 0; }
.vbar { display: flex; flex-direction: column; border-left: 1px solid #b9b6b2; }
.vbar span, .hbar span { display: grid; place-items: center; flex: 0 0 17px; background: #f6f5f3; }
.vbar em { flex: 171; background: #e4e2df; border: solid #b9b6b2; border-width: 1px 0; }
.vbar .rest { flex: 130; background: linear-gradient(90deg, #fdfdfd, #eeece9); border-bottom: 1px solid #b9b6b2; }
.hbar { display: flex; border: solid #b9b6b2; border-width: 1px 1px 0 0; }
.hbar strong { flex: 1; border: solid #b9b6b2; border-width: 0 1px; background: linear-gradient(#fdfdfd, #eeece9); }
.hbar em { width: 10px; background: #e4e2df; border-right: 1px solid #b9b6b2; }

.layout { flex: 1; min-width: 0; display: flex; flex-direction: column; border-left: 1px solid #b3b0ac; }
.layout-tabs { display: flex; align-items: flex-end; height: 36px; flex: none; background: #eeebe7; border-bottom: 1px solid #b3b0ac; padding-top: 2px; margin-left: -1px; }
.ltab { height: 31px; display: flex; align-items: center; justify-content: center; border: 1px solid #b3b0ac; border-bottom: 0; border-radius: 3px 3px 0 0; }
.ltab.active { height: 34px; width: 141px; gap: 4px; padding-right: 4px; margin-bottom: -1px; background: linear-gradient(#fefefe, #fcf9f7); }
.ltab span { font-size: 17px; }
.win { width: 10px; height: 10px; }
.plus { width: 40px; background: #e6e3df; border-left: 0; }
.view-head { display: flex; align-items: center; height: 23px; flex: none; background: #fcf9f6; padding-bottom: 1px; }
.mini { width: 20px; height: 20px; flex: none; display: grid; place-items: center; font: 10px/20px "Open Sans", sans-serif; }
.mini svg { width: 15px; height: 15px; }
.vsep { width: 1px; height: 8px; margin: 0 3px; background: #d3d0cc; }
.view-name { margin: 0 11px 0 auto; color: #000; font-weight: 700; text-decoration: underline 2px; text-underline-offset: 3px; }
.vbtn { width: 19px; height: 19px; margin-right: 2px; flex: none; display: grid; place-items: center; border: 1px solid #b9b6b2; border-radius: 3px; background: #fdfcfb; }
.vbtn svg { width: 12px; height: 12px; fill: none; stroke: #111; }
.vbtn.dim svg { stroke: #999; }
.render { flex: 1; min-height: 0; margin-right: 2px; border: 2px solid #14126f; background: #fff; display: flex; }
.render svg { width: 100%; height: 100%; overflow: hidden; }
.corner text { font: 700 14px "Open Sans", sans-serif; fill: #e61fe6; text-anchor: middle; }

.status { height: 30px; flex: none; display: flex; align-items: center; padding-left: 689px; padding-right: 2px; }
.abort { width: 20px; height: 19px; border: 1px solid #cbc8c4; border-radius: 3px; background: #faf9f8; display: grid; place-items: center; margin-right: 2px; }
.abort svg { width: 11px; height: 11px; }
.progress { flex: 1; height: 23px; border: 1px solid #fff; border-color: #a09d99 #fff #fff #a09d99; margin-right: 12px; }
.corner-grip { width: 12px; height: 12px; align-self: flex-end; background: radial-gradient(circle at 1px 1px, #d0cdc8 1px, transparent 1px) 0 0 / 3px 3px; clip-path: polygon(100% 0, 100% 100%, 0 100%); }
</style>
